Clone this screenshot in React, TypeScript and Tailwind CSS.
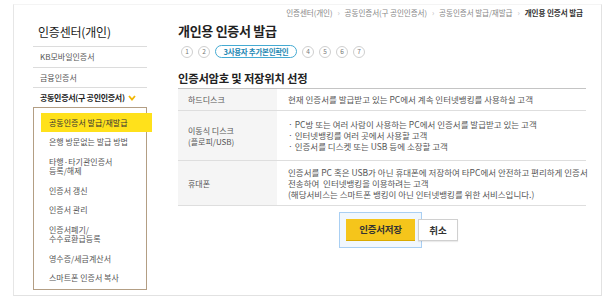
const font = { fontFamily: '"Noto Sans CJK KR", "Noto Sans", sans-serif' };

const subMenu: { label: string[]; active?: boolean }[] = [
  { label: ["공동인증서 발급/재발급"], active: true },
  { label: ["은행 방문없는 발급 방법"] },
  { label: ["타행·타기관인증서", "등록/해제"] },
  { label: ["인증서 갱신"] },
  { label: ["인증서 관리"] },
  { label: ["인증서폐기/", "수수료환급등록"] },
  { label: ["영수증/세금계산서"] },
  { label: ["스마트폰 인증서 복사"] },
];

const rows = [
  {
    head: ["하드디스크"],
    body: ["현재 인증서를 발급받고 있는 PC에서 계속 인터넷뱅킹를 사용하실 고객"],
    h: "h-[22px]",
  },
  {
    head: ["이동식 디스크", "(플로피/USB)"],
    body: [
      "· PC방 또는 여러 사람이 사용하는 PC에서 인증서를 발급받고 있는 고객",
      "· 인터넷뱅킹를 여러 곳에서 사용할 고객",
      "· 인증서를 디스켓 또는 USB 등에 소장할 고객",
    ],
    h: "h-[50px]",
  },
  {
    head: ["휴대폰"],
    body: [
      "인증서를 PC 혹은 USB가 아닌 휴대폰에 저장하여 타PC에서 안전하고 편리하게 인증서",
      "전송하여  인터넷뱅킹을 이용하려는 고객",
      "(해당서비스는 스마트폰 뱅킹이 아닌 인터넷뱅킹를 위한 서비스입니다.)",
    ],
    h: "h-[45px]",
  },
];

function Step({ n }: { n: string }) {
  return (
    <span className="flex h-[12px] w-[12px] items-center justify-center rounded-full border border-[#cfcfcf] text-[6.5px] leading-none text-[#777]">
      {n}
    </span>
  );
}

function Sidebar() {
  return (
    <aside className="w-[114px] shrink-0 pt-[20px]">
      <h1 className="border-b border-[#dcdcdc] pb-[7px] pl-[5px] text-[12px] leading-[14px] tracking-[-0.2px] text-[#1a1a1a]">
        인증센터(개인)
      </h1>
      <div className="flex h-[21px] items-center border-b border-[#dcdcdc] pl-[7px] text-[8px] text-[#555]">
        KB모바일인증서
      </div>
      <div className="flex h-[20px] items-center border-b border-[#dcdcdc] pl-[7px] text-[8px] text-[#555]">
        금융인증서
      </div>
      <div className="flex h-[19px] items-center gap-[2px] pl-[7px] text-[8px] font-bold tracking-[-0.3px] text-[#222]">
        공동인증서(구 공인인증서)
        <svg width="8" height="6" viewBox="0 0 8 6" className="ml-[1px]">
          <polyline points="1,1 4,4.5 7,1" fill="none" stroke="#f2b705" strokeWidth="1.8" />
        </svg>
      </div>
      <div className="h-[183px] border border-[#b39e84] pt-[5px]">
        {subMenu.map((m, i) => (
          <div
            key={i}
            className={
              m.active
                ? "ml-[7px] mr-[-6px] flex h-[19px] flex-col justify-center bg-[#ffe11b] pl-[8px] text-[8px] leading-[10px] text-[#333]"
                : "flex flex-col justify-center py-[5px] pl-[15px] text-[8px] leading-[9.5px] text-[#555]"
            }
          >
            {m.label.map((l) => (
              <span key={l}>{l}</span>
            ))}
          </div>
        ))}
      </div>
    </aside>
  );
}

function Main() {
  return (
    <main className="ml-[31px] w-[408px] shrink-0">
      <div className="mt-[3px] flex h-[10px] items-center justify-end gap-[5px] pr-[3px] text-[7.6px] tracking-[-0.1px] text-[#888]">
        <span>인증센터(개인)</span>
        <span className="text-[#bbb]">›</span>
        <span>공동인증서(구 공인인증서)</span>
        <span className="text-[#bbb]">›</span>
        <span>공동인증서 발급/재발급</span>
        <span className="text-[#bbb]">›</span>
        <span className="font-bold text-[#333]">개인용 인증서 발급</span>
      </div>

      <h2 className="mt-[5px] text-[13px] font-bold leading-[16px] tracking-[-0.3px] text-[#222]">
        개인용 인증서 발급
      </h2>

      <div className="mt-[6px] flex items-center gap-[5px] pl-[3px]">
        <Step n="1" />
        <Step n="2" />
        <span className="flex h-[13px] w-[82px] items-center justify-center rounded-full border border-[#45aad2] text-[7.5px] font-bold tracking-[-0.3px] text-[#2488b4]">
          3사용자 추가본인확인
        </span>
        <Step n="4" />
        <Step n="5" />
        <Step n="6" />
        <Step n="7" />
      </div>

      <h3 className="mt-[14px] text-[11.3px] font-bold leading-[13px] tracking-[-0.2px] text-[#222]">
        인증서암호 및 저장위치 선정
      </h3>

      <div className="mt-[3px] border-t border-[#c4c4c4]">
        {rows.map((r, i) => (
          <div key={i} className={`flex border-b border-[#dedede] ${r.h}`}>
            <div className="flex w-[99px] shrink-0 flex-col justify-center bg-[#f5f5f5] pl-[10px] text-[8px] leading-[11px] text-[#555]">
              {r.head.map((t) => (
                <span key={t}>{t}</span>
              ))}
            </div>
            <div className="flex flex-col justify-center whitespace-pre pl-[11px] text-[8.5px] leading-[11px] text-[#555]">
              {r.body.map((t) => (
                <span key={t}>{t}</span>
              ))}
            </div>
          </div>
        ))}
      </div>

      <div className="mt-[13px] flex items-start justify-center gap-[3px] pl-[40px]">
        <button className="h-[22px] w-[69px] border-b border-[#d9a900] bg-[#f5c51b] text-[9.5px] font-bold tracking-[-0.2px] text-[#333] shadow-[0_0_0_6px_#f1f7fd,0_0_0_7px_#a9cff3]">
          인증서저장
        </button>
        <button className="relative h-[22px] w-[40px] border border-[#d0d0d0] bg-white text-[9.5px] font-bold text-[#333] shadow-[0_1px_1px_rgba(0,0,0,0.08)]">
          취소
        </button>
      </div>
    </main>
  );
}

export default function App() {
  return (
    <div className="h-[303px] w-[606px] overflow-hidden bg-white" style={font}>
      <div className="ml-[13px] mt-[4px] flex h-[292px] w-[589px] border-b border-l border-r border-t border-b-[#e2e2e2] border-l-[#e6e6e6] border-r-[#e2e2e2] border-t-[#f4f4f4] pl-[19px]">
        <Sidebar />
        <Main />
      </div>
    </div>
  );
}
